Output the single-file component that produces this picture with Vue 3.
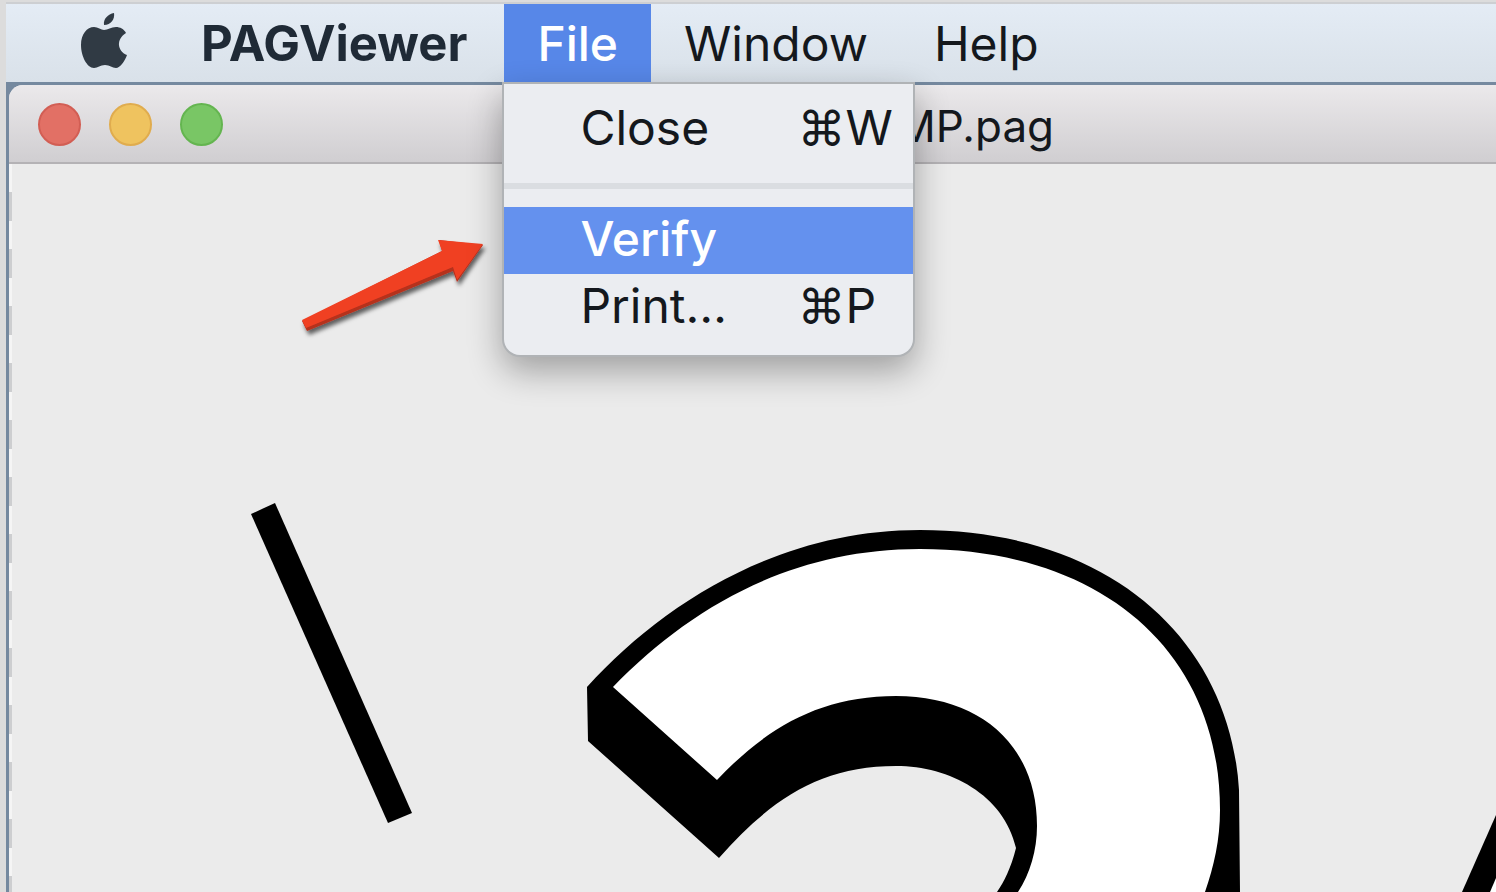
<script setup>
const menus = [
  { label: 'PAGViewer', kind: 'app' },
  { label: 'File', kind: 'open' },
  { label: 'Window', kind: '' },
  { label: 'Help', kind: '' },
]
const groups = [
  [{ label: 'Close', key: '⌘W' }],
  [
    { label: 'Verify', key: '', active: true },
    { label: 'Print…', key: '⌘P' },
  ],
]
const lights = ['close', 'minimize', 'zoom']
</script>

<template>
  <div class="screen">
    <nav class="menubar" aria-label="Menu bar">
      <button class="apple" aria-label="Apple menu">
        <svg viewBox="0 0 48 58" width="48" height="58" aria-hidden="true">
          <path d="M34 2C35 8 31 14 24 14C23 8 28 3 34 2Z" />
          <path d="M24 19C28 19 31 16 36 16C40 16 44 18 46 22C36 28 37 40 47 44C45 50 40 57 36 57C32 57 30 54 25 54C20 54 18 57 14 57C7 57 1 45 1 34C1 23 7 16 14 16C18 16 21 19 24 19Z" />
        </svg>
      </button>
      <div v-for="m in menus" :key="m.label" class="slot">
        <button class="menu-title" :class="m.kind">{{ m.label }}</button>
        <div v-if="m.kind === 'open'" class="dropdown" role="menu">
          <div v-for="(g, i) in groups" :key="i" class="group" role="group">
            <button
              v-for="item in g"
              :key="item.label"
              class="item"
              :class="{ active: item.active }"
              role="menuitem"
            >
              <span class="item-label">{{ item.label }}</span>
              <span class="shortcut">{{ item.key }}</span>
            </button>
          </div>
        </div>
      </div>
    </nav>

    <main class="desktop">
      <section class="window">
        <header class="titlebar">
          <div class="lights">
            <button v-for="l in lights" :key="l" class="light" :class="l" :aria-label="l"></button>
          </div>
          <h1 class="title">MP.pag</h1>
        </header>
        <div class="stage">
          <svg class="art" viewBox="10 164 1486 728" preserveAspectRatio="xMinYMin slice" aria-hidden="true">
            <defs>
              <filter id="arrow-shadow" x="-20%" y="-20%" width="140%" height="150%">
                <feDropShadow dx="2" dy="4" stdDeviation="2" flood-color="#000" flood-opacity="0.6" />
              </filter>
            </defs>
            <path d="M251 514L275 503L412 813L388 823Z" />
            <path d="M587 687C664 602 780 530 920 530C1110 530 1230 640 1239 790L1240 892H997C1004 882 1011 868 1016 848C1004 795 950 766 896 766C820 766 770 800 719 858L588 741Z" />
            <path fill="#fff" d="M613 687C690 608 790 549 920 549C1100 549 1220 650 1220 810C1220 840 1214 866 1205 892H1018C1030 874 1037 850 1037 826C1037 745 980 696 896 696C820 696 766 728 717 780Z" />
            <path d="M1462 892L1496 815V892Z" />
            <path fill="#fff" d="M1490 892L1496 878V892Z" />
            <g filter="url(#arrow-shadow)">
              <path fill="#b5301d" d="M302 321L442 251L439 240L483 245L457 282L453 271L307 331Z" />
              <path fill="#f04024" d="M302 320L442 251L438 240L483 244L457 280L453 267L306 328Z" />
            </g>
          </svg>
        </div>
      </section>
    </main>
  </div>
</template>

<style>
body {
  margin: 0;
  background: #dcdcdc;
}
</style>

<style scoped>
.screen {
  box-sizing: border-box;
  display: flex;
  flex-direction: column;
  height: 100vh;
  padding: 2px 0 0 6px;
  overflow: hidden;
  color: #14181d;
  font-family: Inter, "Liberation Sans", sans-serif;
  font-size: 48px;
  line-height: 56px;
}
button {
  margin: 0;
  padding: 0;
  border: 0;
  background: none;
  color: inherit;
  font: inherit;
}
.menubar {
  position: relative;
  z-index: 2;
  display: flex;
  height: 78px;
  flex: none;
  border-top: 2px solid #cdcfd2;
  background: linear-gradient(#e4ecf5, #d9e1e9);
}
.apple {
  display: flex;
  padding: 7px 40px 0 74px;
}
.apple svg {
  fill: #303a44;
}
.slot {
  position: relative;
  display: flex;
}
.menu-title {
  padding: 2px 33px 0;
}
.menu-title.app {
  padding-right: 37px;
  color: #1f2a36;
  font-size: 49px;
  font-weight: 700;
}
.menu-title.open {
  background: #5787e8;
  color: #fff;
  font-weight: 500;
}
.dropdown {
  position: absolute;
  top: calc(100% + 2px);
  left: 0;
  width: 409px;
  overflow: hidden;
  border-radius: 0 0 16px 16px;
  background: #ebedf1;
  box-shadow: 0 0 0 2px #b0b3b6, 0 14px 34px 2px rgba(0, 0, 0, 0.32);
}
.group {
  padding: 12px 0 20px;
}
.group + .group {
  padding: 18px 0 14px;
  border-top: 6px solid #dadde1;
}
.item {
  box-sizing: border-box;
  display: flex;
  width: 100%;
  height: 67px;
  align-items: center;
  padding: 0 0 3px 76px;
  text-align: left;
}
.item-label {
  width: 217px;
}
.item.active {
  background: #6491ee;
  color: #fff;
  font-weight: 500;
}
.desktop {
  display: flex;
  flex: 1;
  min-height: 0;
  padding: 3px 0 0 3px;
  background: #75899f;
}
.window {
  display: flex;
  flex: 1;
  flex-direction: column;
  overflow: hidden;
  border-radius: 14px 0 0 0;
  background: #ebebeb;
}
.titlebar {
  display: flex;
  height: 77px;
  flex: none;
  align-items: center;
  border-bottom: 2px solid #b4b2b5;
  background: linear-gradient(#ebe9eb, #d0ced1);
}
.lights {
  display: flex;
  gap: 28px;
  padding: 2px 0 0 29px;
}
.light {
  width: 43px;
  height: 43px;
  border: 2px solid;
  border-radius: 50%;
}
.close {
  border-color: #d25e54;
  background: #e27065;
}
.minimize {
  border-color: #e0ac4e;
  background: #efc35f;
}
.zoom {
  border-color: #64b550;
  background: #79c665;
}
.title {
  margin: 0;
  padding: 4px 0 0 673px;
  font-size: 44px;
  font-weight: 400;
}
.stage {
  flex: 1;
  min-height: 0;
  padding-left: 1px;
  background:
    repeating-linear-gradient(#f5f5f5 0 28px, #cdced0 28px 57px) 0 0 / 3px 100% no-repeat;
}
.art {
  display: block;
  width: 100%;
  height: 100%;
}
</style>
